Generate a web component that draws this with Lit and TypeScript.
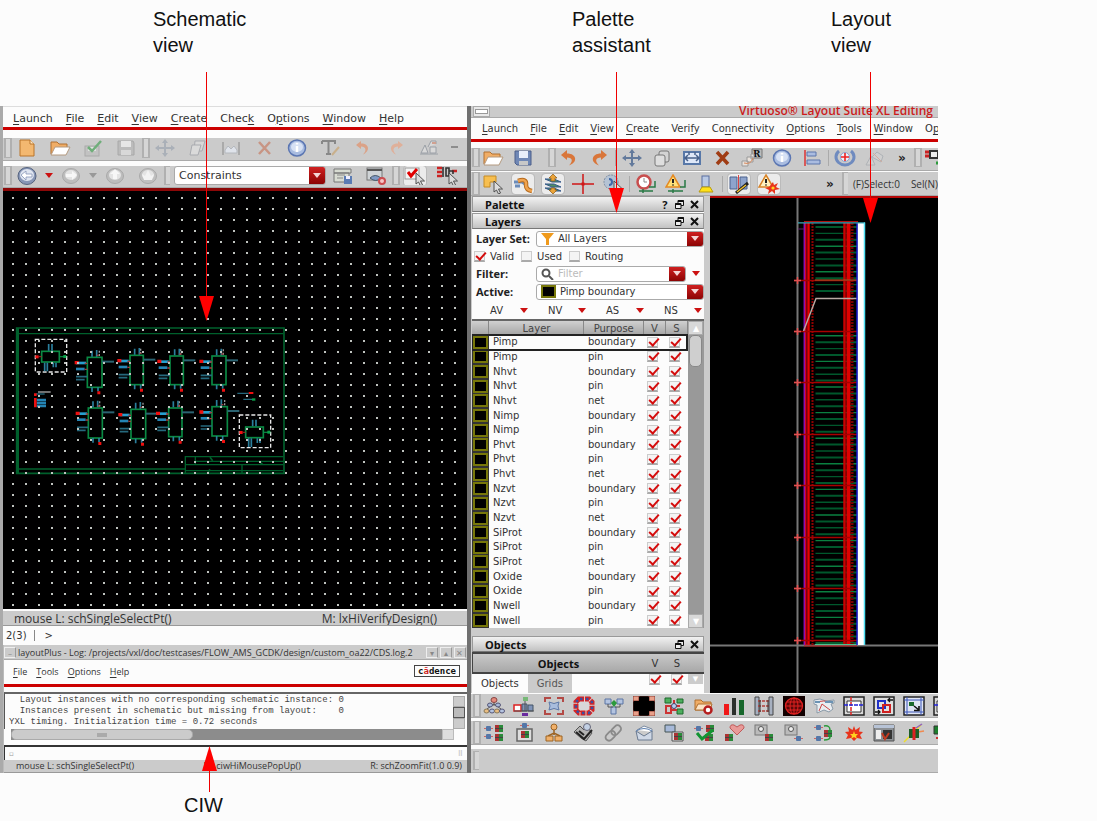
import { LitElement, html, svg, css } from "lit";
import { customElement, property } from "lit/decorators.js";

/* ---------- icon drawings, all on a 22 x 20 grid ---------- */
const disc = (c: string) => svg`<ellipse cx="11" cy="10" rx="8.5" ry="7.5" fill=${c} stroke="#aaa"/><ellipse cx="11" cy="9" rx="6" ry="5" fill="#e4e4e4"/>`;
const pair = (x: number, y: number) => svg`<rect x=${x} y=${y} width="4" height="7" fill="#a33"/><rect x=${x + 4} y=${y} width="4" height="7" fill="#2a8a3a"/><path d="M${x} ${y + 3.5}h8" stroke="#444"/>`;
const plug = (x: number, y: number) => svg`<path d="M${x} ${y + 2.5}h9" stroke="#c66"/><rect x=${x + 2} y=${y} width="5" height="5" rx="1" fill="#5577a8"/>`;
const cross4 = (c: string) => svg`<path d="M11 1l3 4h-2v4h5v-2l4 3-4 3v-2h-5v4h2l-3 4-3-4h2v-4H5v2l-4-3 4-3v2h5V5H8z" fill=${c}/>`;
const cursor = svg`<path d="M12 7v11l2.5-2 2 4 2-1-2-4h4z" fill="#ddd" stroke="#444" stroke-width=".9"/>`;

const ICONS: Record<string, unknown> = {
  new: svg`<path d="M4 2h10l4 4v12H4z" fill="#f3b870" stroke="#b9752b"/><path d="M14 2v4h4" fill="#ffe6c0" stroke="#b9752b"/>`,
  open: svg`<path d="M2 16V4h6l2 2h8v3" fill="#f0ad66" stroke="#b07030"/><path d="M2 17l4-8h15l-4 8z" fill="#fff" stroke="#b49a80"/>`,
  checksave: svg`<rect x="3" y="8" width="14" height="10" fill="#c2c2c2" stroke="#aaa"/><path d="M6 9h8v4H6z" fill="#e2e2e2"/><path d="M6 9l4 4 9-10" fill="none" stroke="#6fae7a" stroke-width="2.5"/>`,
  saveoff: svg`<path d="M3 3h15l1 2v12H3z" fill="#bcbcbc" stroke="#a8a8a8"/><path d="M6 3h10v6H6z" fill="#e6e6e6"/><path d="M6 12h10v5H6z" fill="#d8d8d8"/>`,
  save: svg`<path d="M3 3h16v14H5l-2-2z" fill="#6f87b5" stroke="#4c5f8a"/><path d="M7 3h9v7H7z" fill="#e8eefa"/><path d="M7 13h9v4H7z" fill="#c8c8c8"/>`,
  moveoff: cross4("#aab0b8"),
  move: cross4("#637a9c"),
  copyoff: svg`<path d="M8 3h10l-3 10H7z" fill="#d8d8d8" stroke="#a9abb0"/><path d="M5 7h9l-3 10H3z" fill="#dadada" stroke="#a9abb0"/>`,
  copy: svg`<rect x="8" y="3" width="10" height="11" rx="2" fill="#d4d4d4" stroke="#777"/><rect x="4" y="7" width="10" height="11" rx="2" fill="#dedede" stroke="#777"/>`,
  stretchoff: svg`<path d="M3 4v13M19 4v13" stroke="#aaa" stroke-width="2"/><path d="M5 12l3-4 3 3 3-3 3 4v3H5z" fill="#dfe3ea" stroke="#b4b8be"/>`,
  stretch: svg`<rect x="3" y="4" width="16" height="12" fill="#dfe8f8" stroke="#5878a8" stroke-width="2"/><path d="M4 10h14M7 7l-3 3 3 3M15 7l3 3-3 3M8 4v3M14 4v3" stroke="#48618a" fill="none" stroke-width="1.5"/>`,
  xoff: svg`<path d="M6 4l11 12M17 4L6 16" stroke="#c89584" stroke-width="2.5"/>`,
  x: svg`<path d="M6 4l11 12M17 4L6 16" stroke="#a03c14" stroke-width="3.5"/>`,
  info: svg`<ellipse cx="11" cy="10" rx="8.5" ry="8" fill="#a9bce0" stroke="#5b76b2" stroke-width="1.5"/><ellipse cx="11" cy="9" rx="6" ry="5" fill="#d7e1f4"/><path d="M11 5v1.6M11 8v6" stroke="#fff" stroke-width="2.4"/>`,
  text: svg`<path d="M3 3h13v3M3 3v3M9.500 3v12M7 16h5" stroke="#888" stroke-width="2" fill="none"/><path d="M13 17l7-8" stroke="#c9b08c" stroke-width="2"/>`,
  undooff: svg`<path d="M9 3L4 7l5 4V8.500c5 0 6 4 2 8 7-3 7-11-2-11z" fill="#dba287"/>`,
  redooff: svg`<path d="M13 3l5 4-5 4V8.500c-5 0-6 4-2 8-7-3-7-11 2-11z" fill="#dfb09a"/>`,
  undo: svg`<path d="M9 2L3 7l6 5V9.500c6 0 6 4 2 8 9-3 8-12-2-12z" fill="#d9763a"/>`,
  redo: svg`<path d="M13 2l6 5-6 5V9.500c-6 0-6 4-2 8-9-3-8-12 2-12z" fill="#d9763a"/>`,
  abc: svg`<path d="M2 16h18M3 15l4-8 3 8zM10 9l3-6h5v3M12 9h6v6h-6z" fill="#d9d9d9" stroke="#9a9fa6"/><path d="M14 5h4" stroke="#d0a090" stroke-width="2"/>`,
  dash: svg`<path d="M0 9h7M16 9h5" stroke="#8d8d8d" stroke-width="2"/>`,
  back: svg`<ellipse cx="11" cy="10" rx="9" ry="8.500" fill="#8796b6" stroke="#56647f"/><ellipse cx="11" cy="9" rx="7" ry="6" fill="#dfe5f0"/><path d="M5 9l5-4v3h6v3h-6v3z" fill="#fff" stroke="#8796b6" stroke-width=".8"/>`,
  fwdoff: svg`${disc("#bdbdbd")}<path d="M17 9l-5-4v3H6v3h6v3z" fill="#f7f7f7"/>`,
  upoff: svg`${disc("#bdbdbd")}<path d="M11 3l-5 5h3v5h4V8h3z" fill="#f7f7f7"/>`,
  topoff: svg`${disc("#c0c0c0")}<path d="M5 8l3 2 3-6 3 6 3-2-2 6H7z" fill="#f3f3f3"/>`,
  notesave: svg`<path d="M2 3h17v4H2zM2 7h15v9H2z" fill="#d8dcd2" stroke="#777"/><path d="M5 9h8M5 12h6" stroke="#888"/><path d="M12 10h8v8h-8z" fill="#5a7bb4"/><path d="M14 10h4v3h-4z" fill="#eef"/>`,
  viewdel: svg`<rect x="2" y="2" width="15" height="12" fill="#cfd3d6" stroke="#777"/><path d="M2 4h15" stroke="#555" stroke-width="2"/><path d="M5 12q5-5 11 0-5 5-11 0z" fill="#7f99c4" stroke="#456"/><circle cx="17" cy="15" r="3" fill="#f6c8c8" stroke="#cc4d50" stroke-width="2"/>`,
  checksel: svg`<rect x="1" y="2" width="14" height="11" fill="#f4f4f4" stroke="#999"/><path d="M4 6l3 4 6-7" stroke="#e00000" stroke-width="3" fill="none"/>${cursor}`,
  netsel: svg`<path d="M0 2h5M0 6h5M0 10h5M15 5h5" stroke="#c22" stroke-width="2.500"/><path d="M6 1v10M9 2h3v8H9zM12 5h4v3" stroke="#333" stroke-width="1.600" fill="none"/>${cursor}`,
  rotate: svg`<path d="M11 1h10v9H11z" fill="#bbb" stroke="#777"/><text x="12" y="9" font-size="9" font-weight="700" fill="#111" font-family="DejaVu Serif, serif">R</text><path d="M1 13h6v5H1zM6 9h6v5H6zM10 6h3v5h-3z" fill="#e9e2dc" stroke="#999"/><path d="M3 15q7 2 9-5" fill="none" stroke="#d8885b"/>`,
  align: svg`<path d="M4 2v16" stroke="#d33" stroke-width="1.500"/><path d="M6 4h9v4H6zM6 12h13v4H6z" fill="#aabce0" stroke="#5d77ac"/>`,
  target: svg`<path d="M5 3a9 8 0 1 0 12 0" fill="none" stroke="#6f8bbf" stroke-width="3"/><circle cx="11" cy="9" r="4.500" fill="#edf1fa" stroke="#8aa0cc"/><path d="M11 5v8M7 9h8" stroke="#e22" stroke-width="1.600"/>`,
  figoff: svg`<path d="M2 17l5-9 4 9zM8 9l5-5 6 4-2 6z" fill="#cfcfcf" stroke="#aeb2b6"/><path d="M9 5l9 9" stroke="#d2ac9e"/>`,
  neton: svg`<path d="M1 4h5M1 8h5" stroke="#c22" stroke-width="3"/><path d="M6 3h8v7H6z" fill="#eee" stroke="#333" stroke-width="2"/><path d="M12 15h9M16 11v8" stroke="#2c9a3c" stroke-width="3"/>`,
  rectcur: svg`<path d="M2 2h12v6H8v5H2z" fill="#f7bf50" stroke="#c58b24"/>${cursor}`,
  route: svg`<path d="M2 8h8l3 2M3 12h5" stroke="#6b8cba" stroke-width="3" fill="none"/><path d="M6 7q9-3 8 4 0 5 6 6" fill="none" stroke="#b86c1e" stroke-width="4.500"/><path d="M6 7q9-3 8 4 0 5 6 6" fill="none" stroke="#efa34f" stroke-width="2.500"/>`,
  layers: svg`<path d="M3 5h9l7 3h-9zM3 10h9l7 3h-9zM3 14h9l7 3h-9z" fill="#4f8f62" stroke="#36598c"/><path d="M11 0l4 4h-2v3h-4V4H7zM11 20l4-4h-2v-2h-4v2H7z" fill="#eba338" stroke="#875a1a" stroke-width=".7"/>`,
  crosshair: svg`<path d="M0 10h22M11 0v20" stroke="#cf1717" stroke-width="1.500"/><path d="M9.500 8.500h3v3h-3z" fill="#cf1717"/>`,
  probe: svg`<circle cx="9" cy="8" r="7" fill="#b5c3d4" stroke="#7b8aa0" stroke-dasharray="2 1"/><path d="M7 5a3 3 0 1 1 0 6" fill="none" stroke="#3f68a8" stroke-width="2"/>${cursor}`,
  gauge: svg`<circle cx="9" cy="8" r="6.500" fill="#fff" stroke="#c84e4e" stroke-width="2.500"/><path d="M9 4v4h3" stroke="#888" fill="none"/><path d="M4 17h14M8 15v4M14 13h6V7" stroke="#287a45" stroke-width="1.500" fill="none"/>`,
  warnnet: svg`<path d="M8 1l7 12H1z" fill="#ffe27a" stroke="#e58a22" stroke-width="1.500"/><path d="M8 5v4M8 10.500v1" stroke="#222" stroke-width="2"/><path d="M3 17h15M8 15v4M15 13h5V6" stroke="#287a45" stroke-width="1.500" fill="none"/>`,
  lamp: svg`<rect x="7" y="2" width="7" height="11" fill="#b9c9e4" stroke="#5a6fa0"/><path d="M4 18l3-5h8l3 5z" fill="#ffe21a" stroke="#b79a10"/>`,
  pencil: svg`<path d="M2 3h7v12H2zM12 3h7v12h-7z" fill="#8ea4cd" stroke="#4c628e"/><path d="M10.500 1v14" stroke="#d44"/><path d="M8 19L20 9" stroke="#222" stroke-width="3"/><path d="M9 18l9-7" stroke="#f0c030" stroke-width="1.500"/>`,
  warnburst: svg`<path d="M8 1l7 12H1z" fill="#fff2c0" stroke="#d8842a" stroke-width="1.500"/><path d="M8 5v4M8 10.500v1" stroke="#222" stroke-width="2"/><path d="M15 8l1 3 4-2-2 4 4 2-5 1 0 4-3-3-4 3 1-4-4-2 4-1z" fill="#e8341c"/><circle cx="15" cy="14" r="1.600" fill="#ffd21e"/>`,
  tree: svg`<path d="M11 5v5M4 13l7-5 7 5" stroke="#555" fill="none"/><ellipse cx="11" cy="4" rx="3" ry="2.500" fill="#e58b7c" stroke="#844"/><ellipse cx="7" cy="9" rx="2.500" ry="2" fill="#a6b8d8" stroke="#557"/><ellipse cx="15" cy="9" rx="2.500" ry="2" fill="#a6b8d8" stroke="#557"/><ellipse cx="3.500" cy="15" rx="2.500" ry="2" fill="#e9bd82" stroke="#875"/><ellipse cx="9" cy="15" rx="2.500" ry="2" fill="#b5c4e0" stroke="#557"/><ellipse cx="14" cy="15" rx="2.500" ry="2" fill="#e9bd82" stroke="#875"/><ellipse cx="19" cy="15" rx="2.500" ry="2" fill="#b5c4e0" stroke="#557"/>`,
  origin: svg`<path d="M1 9h7v6H1z" fill="#fff" stroke="#d22" stroke-width="1.500"/><path d="M9 8h5v7H9zM15 9h5v6h-5z" fill="#7f93b8" stroke="#456"/><path d="M12 1v14M1 15h20" stroke="#555"/><path d="M10 1h5v4h-5z" fill="#78b978"/><path d="M9 17h6v3H9z" fill="#6a2aa0"/>`,
  fit: svg`<path d="M2 6V2h6M14 2h6v4M20 14v4h-6M8 18H2v-4" stroke="#b34a46" stroke-width="2" fill="none"/><path d="M6 6q5 3 10 0-2 4 0 8-5-3-10 0 2-4 0-8z" fill="#a9bddd" stroke="#5c78a8"/>`,
  ring: svg`<path d="M6 3h10l3 3v8l-3 3H6l-3-3V6z" fill="#d8d8d8" stroke="#d92222" stroke-width="5" stroke-dasharray="5 1"/><path d="M6 3h10l3 3v8l-3 3H6l-3-3V6z" fill="none" stroke="#3b4fa0" stroke-width="2.500" stroke-dasharray="2.500 3.500" stroke-dashoffset="-1"/>`,
  flow: svg`<path d="M2 3h6v5H2zM14 3h6v5h-6zM8 11h5v7H8z" fill="#b4c4e0" stroke="#5b74a4"/><path d="M5 8v3h5M17 8v3h-5" stroke="#555" fill="none"/><path d="M8 7l3-3 3 3-3 4z" fill="#2c9a3c"/>`,
  blackcross: svg`<path d="M0 0h22v20H0z" fill="#2a1512"/><path d="M0 0h6v5H0zM16 0h6v5h-6zM0 15h6v5H0zM16 15h6v5h-6z" fill="#e8a08a" stroke="#8a3a30"/><path d="M6 1h10v4h5v10h-5v4H6v-4H1V5h5z" fill="#000"/>`,
  blocks: svg`<path d="M2 2h6v5H2zM14 3h6v4h-6zM14 13h6v5h-6z" fill="#4eae5e" stroke="#1d6a2c"/><path d="M3 10h5v7H3zM11 4v6h6M8 14h6" fill="none" stroke="#c33" stroke-width="2"/><circle cx="11" cy="10" r="2.500" fill="#b8cdf0" stroke="#446"/>`,
  folderx: svg`<path d="M2 14V4h6l2 2h8v8z" fill="#f0ad66" stroke="#b07030"/><path d="M2 14l3-6h14l-2 6z" fill="#fbe3c5" stroke="#b07030"/><circle cx="15" cy="14" r="3.500" fill="#fff" stroke="#b51e1e" stroke-width="2.500"/>`,
  bars: svg`<path d="M1 8h5v11H1z" fill="#f01818"/><path d="M9 2h4v17H9z" fill="#2b2f2b"/><path d="M16 4h5v15h-5z" fill="#17672b"/>`,
  ladder: svg`<path d="M2 1h4v18H2zM16 1h4v18h-4z" fill="#a7b0c0" stroke="#444"/><path d="M5 5h12M5 10h12M5 15h12" stroke="#b3403a" stroke-width="1.500" stroke-dasharray="3 1"/><path d="M7 4v12M15 4v12" stroke="#333"/>`,
  globe: svg`<path d="M0 0h22v20H0z" fill="#100"/><ellipse cx="11" cy="10" rx="8.500" ry="8" fill="#5a0808" stroke="#e02020" stroke-width="1.300"/><ellipse cx="11" cy="10" rx="4" ry="8" fill="none" stroke="#e02020"/><path d="M11 2v16M3 10h16M4 6h14M4 14h14" stroke="#e02020"/>`,
  map: svg`<path d="M1 4l6-1 6 2 8-1v3l-3 1 2 5-4 3-5-2-7 3V9L1 8z" fill="#e9eef2" stroke="#8a9aa8"/><path d="M2 6q8-2 18 0M6 15l3-7 8 6" stroke="#c44" fill="none"/><path d="M12 5h8v2h-8zM2 5h5v2H2z" fill="#6c93b4"/>`,
  framecross: svg`<path d="M1 1h20v18H1z" fill="#d8d8d8" stroke="#222" stroke-width="1.500"/><path d="M4 5h14v11H4z" fill="#fff" stroke="#333"/><path d="M8 1v18" stroke="#d22" stroke-width="1.500" stroke-dasharray="4 1"/><path d="M1 9h20" stroke="#2222d8" stroke-width="1.500" stroke-dasharray="4 1"/>`,
  swap: svg`<path d="M1 1h20v18H1z" fill="#e0e0e0" stroke="#222" stroke-width="1.500"/><path d="M5 5h7v7H5z" fill="none" stroke="#2030c8" stroke-width="2"/><path d="M10 9h7v7h-7z" fill="none" stroke="#d02020" stroke-width="2"/><path d="M15 4h5M17 2l-2 2 2 2M2 16h5M5 14l2 2-2 2" stroke="#111" stroke-width="1.300" fill="none"/>`,
  resize: svg`<path d="M1 1h20v18H1z" fill="#e0e6f4" stroke="#222" stroke-width="1.500"/><path d="M4 1v18M18 1v18M1 4h20M1 16h20" stroke="#3a55b8"/><path d="M6 6h5v4H6z" fill="#1b6a2e"/><path d="M11 10l5 4M16 10v4.500h-5" stroke="#111" stroke-width="1.600" fill="none"/>`,
  sendpair: svg`${plug(1, 3)}${plug(1, 11)}${pair(12, 2)}${pair(12, 11)}`,
  chipbox: svg`<rect x="4" y="6" width="15" height="12" fill="#ddd" stroke="#666" stroke-width="1.500"/>${pair(8, 8)}${plug(7, 0)}`,
  stamp: svg`<circle cx="11" cy="4" r="3" fill="#f0b06a" stroke="#9c6424"/><path d="M11 7v5M5 13l6-3 6 3" stroke="#9c6424" fill="none" stroke-width="1.500"/><path d="M3 13h7v5H3zM12 13h7v5h-7z" fill="#f0b06a" stroke="#9c6424"/>`,
  tools: svg`<path d="M1 9l6-6 4 4 3-3 5 6-6 8-5-3z" fill="#b4b4b4" stroke="#555"/><circle cx="14" cy="4" r="3.500" fill="#c2d0e4" stroke="#667"/><path d="M3 9l8 7 8-9M6 8l5 4" stroke="#222" stroke-width="2" fill="none"/>`,
  clip: svg`<g transform="rotate(-45 11 10)" fill="none" stroke="#8a8a8a" stroke-width="1.800"><rect x="1" y="6" width="11" height="7" rx="3.500"/><rect x="9" y="6" width="11" height="7" rx="3.500"/></g>`,
  mail: svg`<path d="M4 7l7-4 8 3v3" fill="#fff" stroke="#7a8aa0"/><path d="M3 8l8 5 8-5v9H5z" fill="#cfd8e6" stroke="#6a7a90"/><path d="M3 8q8-5 16 0" fill="none" stroke="#5c7fb0"/>`,
  screens: svg`<path d="M2 2h10v7H2z" fill="#a7b9d8" stroke="#455"/><path d="M9 9h11v9H9z" fill="#ddd" stroke="#555"/>${pair(11, 10)}`,
  okpair: svg`${pair(13, 2)}${pair(12, 11)}${plug(1, 3)}<path d="M4 10l5 6 11-9" stroke="#129432" stroke-width="3" fill="none"/>`,
  heartpair: svg`<path d="M14 12L7 5q0-4 4-3l3 2 3-2q4-1 4 3z" fill="#e89a98" stroke="#c05a5a"/>${pair(2, 11)}`,
  findpair: svg`<rect x="2" y="2" width="12" height="10" fill="#bbb" stroke="#777"/><circle cx="8" cy="6" r="2.500" fill="#eee" stroke="#555"/>${pair(12, 11)}`,
  findplug: svg`<rect x="2" y="2" width="12" height="10" fill="#bbb" stroke="#777"/><circle cx="8" cy="6" r="2.500" fill="#eee" stroke="#555"/>${plug(11, 13)}`,
  loop: svg`${plug(1, 2)}${plug(1, 13)}${pair(11, 7)}<path d="M11 3q6-1 6 4M11 17q6 0 6-3" stroke="#2a9a3a" stroke-width="1.500" fill="none"/>`,
  burst: svg`<path d="M11 3l1.500 4L17 4l-1 4.500 4 .5-3 3 2 4-5-1-3 3-3-3-5 1 2-4-3-3 4-.5L5 4l4.500 3z" fill="#e8341c"/><path d="M11 8l1 3h3l-2 2 1 3-3-2-3 2 1-3-2-2h3z" fill="#ffd21e"/>`,
  window: svg`<path d="M1 2h20v16H1z" fill="#8c9094" stroke="#555"/><path d="M1 2h20v3H1z" fill="#b7c3d6"/><path d="M3 7h5v9H3z" fill="#eee"/><path d="M10 7h9v9h-9z" fill="#333"/><path d="M9 10l3 6 4-6" stroke="#c23b22" stroke-width="2" fill="none"/>`,
  spark: svg`<path d="M1 19L18 2" stroke="#eedd28" stroke-width="1.500"/><path d="M13 5l6-4" stroke="#9060c0" stroke-width="1.500"/><path d="M15 9l6-1" stroke="#f08a50" stroke-width="1.500"/><path d="M6 6h10v9H6z" fill="#1c5e26"/><path d="M11 4v13" stroke="#d22" stroke-width="3"/>`,
  greenbox: svg`<path d="M1 3h9v8H1z" fill="#1c7e2c" stroke="#333"/><path d="M3 15h8" stroke="#c33" stroke-width="2"/>`,
};

/* ---------- shared styles ---------- */
const base = css`
  :host { display: block; min-width: 0; color: #333; font-family: "DejaVu Sans", sans-serif; }
  * { box-sizing: border-box; }
  button, select, input { font: inherit; color: inherit; background: none; border: 0; padding: 0; margin: 0; border-radius: 0; }
  svg { display: block; flex: none; }
  .menu { display: flex; align-items: center; overflow: hidden; white-space: nowrap; background: #fcfcfc; }
  .menu button { flex: none; }
  .menu u { text-underline-offset: 2px; }
  .rule { height: 3px; background: #cc0000; }
  .caret { width: 0; height: 0; border: 4px solid transparent; border-top: 5px solid #cc1111; border-bottom: 0; flex: none; }
  .caret.off { border-top-color: #999; }
  .combo { display: flex; align-items: center; min-width: 0; background: #fff; border: 1px solid #aaa; border-radius: 3px; overflow: hidden; gap: 4px; }
  .combo select, .combo input { appearance: none; flex: 1; min-width: 0; outline: 0; }
  .drop { align-self: stretch; width: 16px; flex: none; display: flex; align-items: center; justify-content: center; background: linear-gradient(#cf2020, #8c0404); }
  .drop .caret { border-top-color: #f4d6d6; }
  .status { display: flex; align-items: center; justify-content: space-between; background: #cbcbcb; white-space: nowrap; overflow: hidden; font-family: "Open Sans", sans-serif; }
`;

const menu = (items: string[]) => items.map((t) => {
  const [a, b, c] = t.split("_");
  return html`<button>${a}<u>${b}</u>${c}</button>`;
});

/* Toolbar: "|" grip, ":" separator, "." spacer, "v"/"w" drop arrows, ">" overflow mark, "~name" pressed button */
@customElement("tool-bar")
class ToolBar extends LitElement {
  @property() items = "";
  @property({ type: Number }) pitch = 30;
  static styles = [base, css`
    .bar { display: flex; align-items: center; height: 100%; overflow: hidden; }
    .grip { flex: none; width: 8px; align-self: stretch; border: solid #b0b0b0; border-width: 1px 2px; background: #d6d6d6; margin-inline-end: -2px; }
    .sep { flex: none; width: 1px; height: 16px; margin: 0 1px; background: #aaa; }
    .spacer { flex: none; width: 10px; }
    button { flex: none; height: 100%; display: flex; align-items: center; justify-content: center; }
    .arrow { width: 11px; }
    .more { width: 24px; font-size: 12px; font-weight: 700; color: #222; }
    .down svg { background: #ececec; outline: 1px solid #bbb; border-radius: 3px; }
  `];
  render() {
    return html`<div class="bar">${this.items.split(" ").map((n) => {
      if (n === "|") return html`<span class="grip"></span>`;
      if (n === ":") return html`<span class="sep"></span>`;
      if (n === ".") return html`<span class="spacer"></span>`;
      if (n === "v") return html`<button class="arrow" aria-label="history"><span class="caret"></span></button>`;
      if (n === "w") return html`<button class="arrow" aria-label="history"><span class="caret off"></span></button>`;
      if (n === ">") return html`<button class="more">»</button>`;
      const on = n[0] === "~";
      const key = on ? n.slice(1) : n;
      return html`<button class=${on ? "down" : ""} style="width:${this.pitch}px" aria-label=${key}><svg width="22" height="20" viewBox="0 0 22 20">${ICONS[key]}</svg></button>`;
    })}</div>`;
  }
}

/* ---------- schematic canvas, drawn on a grid three units to the pixel ---------- */
const CHIPS = [[262, 112, 44, 90], [390, 106, 40, 88], [510, 108, 40, 86], [636, 108, 42, 86], [265, 264, 42, 90], [393, 268, 44, 88], [506, 264, 40, 86], [636, 260, 46, 88]];

@customElement("schematic-canvas")
class SchematicCanvas extends LitElement {
  static styles = [base, css`.canvas { width: 100%; height: 418px; background: #000; }`];
  chip([x, y, w, h]: number[]) {
    return svg`
      <rect x=${x} y=${y} width=${w} height=${h} fill="none" stroke="#0a8a44" stroke-width="5"/>
      <path d="M${x + 14} ${y - 2}v-18M${x + 28} ${y - 2}v-20M${x + 14} ${y + h}v14M${x + 32} ${y + h}v12" stroke="#2a7f9c" stroke-width="5"/>
      <path d="M${x + w - 8} ${y - 4}v-20" stroke="#999" stroke-width="4" stroke-dasharray="6 4"/>
      <path d="M${x + w} ${y + 13}h36" stroke="#2b6472" stroke-width="6"/>
      <path d="M${x - 34} ${y + 17}h30" stroke="#26a0d0" stroke-width="8"/>
      <path d="M${x - 34} ${y + 35}h26" stroke="#2484b4" stroke-width="8"/>
      <path d="M${x - 34} ${y + 58}h34M${x - 34} ${y + 67}h26" stroke="#25687c" stroke-width="5"/>
      <path d="M${x - 38} ${y + 11}h12v10h-12zM${x + 30} ${y + h + 12}h9v9h-9z" fill="#ee1010"/>
      <path d="M${x - 8} ${y + 18}h8M${x - 8} ${y + 36}h8M${x + 28} ${y - 6}h6" stroke="#a04040" stroke-width="4"/>`;
  }
  block(x: number, y: number) {
    return svg`
      <rect x=${x} y=${y} width="94" height="98" fill="none" stroke="#e8e8e8" stroke-width="4" stroke-dasharray="12 6"/>
      <rect x=${x + 19} y=${y + 36} width="53" height="32" fill="none" stroke="#0a8a44" stroke-width="5"/>
      <path d="M${x + 40} ${y + 34}v-20M${x + 50} ${y + 34}v-20M${x + 28} ${y + 70}v26M${x + 36} ${y + 70}v26M${x + 54} ${y + 70}v14M${x + 62} ${y + 70}v14" stroke="#2a7f9c" stroke-width="5"/>
      <path d="M${x} ${y + 48}h10v9H${x}z" fill="#ee1010"/><path d="M${x + 10} ${y + 52}h9" stroke="#a22" stroke-width="3"/>
      <path d="M${x + 74} ${y + 52}h12" stroke="#0a8040" stroke-width="4"/><path d="M${x + 84} ${y + 47}h9v9h-9z" fill="#08a048"/>`;
  }
  render() {
    return svg`<svg class="canvas" role="img" aria-label="schematic">
      <defs><pattern id="dots" x="9" y="6" width="13" height="11" patternUnits="userSpaceOnUse"><rect width="2" height="2" fill="#c0c4c0"/></pattern></defs>
      <g transform="translate(-3 129) scale(.33333)">
        <g fill="none" stroke="#00602c">
          <path d="M50 24H852V460H50z" stroke-width="5"/><path d="M54 41H850M54 447H556" stroke-width="4"/><path d="M54 24V460" stroke-width="6"/>
          <path d="M556 460V410H850M586 410v24M556 434H850M586 424H850M726 434v26M556 452H850" stroke-width="4"/>
          <path d="M630 412l8 10M780 426l8 8M624 456l6-8" stroke-width="5"/>
        </g>
        ${CHIPS.map((c) => this.chip(c))}
        ${this.block(106, 58)}${this.block(718, 285)}
        <path d="M114 216h38" stroke="#aaa" stroke-width="4"/><path d="M108 222h26" stroke="#25687c" stroke-width="4"/>
        <path d="M110 240h28M110 249h28M110 258h28" stroke="#2484b4" stroke-width="7"/>
        <path d="M102 220h8v8h-8zM102 234h8v28h-8zM746 216h14v6h-14z" fill="#ee1010"/>
        <path d="M712 220h34M730 238h26" stroke="#25687c" stroke-width="4"/><path d="M756 235h10v7h-10z" fill="#08a048"/>
      </g>
      <rect width="100%" height="100%" fill="url(#dots)"/>
    </svg>`;
  }
}

/* ---------- layout canvas ---------- */
@customElement("layout-canvas")
class LayoutCanvas extends LitElement {
  static styles = [base, css`:host { background: #000; overflow: hidden; } .canvas { width: 100%; height: 495px; }`];
  render() {
    const fingers: number[] = [];
    for (let y = 227; y < 643; y += 6.4) if (y < 296 || y > 334) fingers.push(y);
    const rows = [280, 331, 382, 434, 485, 537, 588, 640];
    return svg`<svg class="canvas" role="img" aria-label="layout"><g transform="translate(-710 -198)">
      <path d="M797.5 198V693" stroke="#777" stroke-width="2"/><path d="M700 645.500H2000" stroke="#777" stroke-width="2"/>
      ${fingers.map((y, i) => svg`<path d="M815.5 ${y}H857" stroke=${i % 4 === 3 ? "#0a8040" : "#00582c"} stroke-width=${i % 2 ? 1.4 : 2}/>`)}
      <path d="M808.500 223V645" stroke="#e80000" stroke-width="2.500"/>
      <path d="M812.500 223V645" stroke="#900000" stroke-width="2" stroke-dasharray="2 1"/>
      <path d="M805.800 223V645" stroke="#e00020" stroke-width="1.500"/><path d="M804.300 223V645" stroke="#8a10b0" stroke-width="1.500"/>
      <path d="M844.500 223V645" stroke="#c80000" stroke-width="2.500"/><path d="M848.500 223V645" stroke="#e00000" stroke-width="4"/>
      <path d="M852 223V645" stroke="#780000" stroke-width="3" stroke-dasharray="2 1"/><path d="M846 223V645" stroke="#960000"/>
      ${rows.map((y) => svg`<path d="M794 ${y + 0.5}H857" stroke="#a80000" stroke-width="1.500"/><path d="M794 ${y + 0.5}h7M797.5 ${y - 3}v7" stroke="#e05050" stroke-width="1.500"/>`)}
      <path d="M815 280H857" stroke="#a0622c"/>
      <path d="M803.500 331L816 298.500H857" fill="none" stroke="#b9aaa4" stroke-width="1.400"/>
      <path d="M804 221.500H858M804 646H857" stroke="#b01010"/><path d="M815 644.500H857" stroke="#50c090"/>
      <path d="M798 229h6" stroke="#602070"/>
      <path d="M857.500 223h7v422h-7z" fill="#fff"/><path d="M857 223V645" stroke="#1818f0" stroke-width="1.300"/>
      <path d="M798 222.800H865" stroke="#3aa8b8" stroke-width="1.300"/><path d="M864.500 222.500V645" stroke="#50e0f4" stroke-width="1.500"/>
    </g></svg>`;
  }
}

/* ---------- palette assistant ---------- */
const LAYERS: [string, string[]][] = [
  ["Pimp", ["boundary", "pin"]], ["Nhvt", ["boundary", "pin", "net"]], ["Nimp", ["boundary", "pin"]],
  ["Phvt", ["boundary", "pin", "net"]], ["Nzvt", ["boundary", "pin", "net"]], ["SiProt", ["boundary", "pin", "net"]],
  ["Oxide", ["boundary", "pin"]], ["Nwell", ["boundary", "pin"]],
];
const ROWS = LAYERS.flatMap(([n, ps]) => ps.map((p) => [n, p]));

@customElement("palette-panel")
class PalettePanel extends LitElement {
  static styles = [base, css`
    :host { font-size: 10px; background: #fcfcfc; overflow: hidden; }
    .title { display: flex; align-items: center; height: 16px; margin-bottom: 1px; padding: 0 2px 0 12px; gap: 3px; border: 1px solid #999; border-bottom-color: #777; background: linear-gradient(#f2f2f2, #c2c2c2); font: 700 11px "Open Sans", sans-serif; color: #111; }
    .title h2 { flex: 1; font: inherit; margin: 0; }
    .title button { width: 12px; height: 14px; display: flex; align-items: center; justify-content: center; }
    .row { display: grid; grid-template-columns: 60px 1fr; align-items: center; height: 17px; padding-left: 4px; margin-bottom: 1px; }
    .row .name { font: 700 11px "Open Sans", sans-serif; color: #222; }
    .row .combo { height: 16px; padding-left: 4px; }
    .filter { display: flex; align-items: center; min-width: 0; }
    .filter .combo { flex: 1; }
    .filter > .caret { margin: 0 4px 0 6px; }
    .filter input::placeholder { color: #bbb; opacity: 1; }
    .checks { display: flex; align-items: center; height: 17px; gap: 7px; padding-left: 2px; }
    .checks label { display: flex; align-items: center; gap: 5px; }
    input[type="checkbox"] { appearance: none; display: block; width: 11px; height: 11px; background: #f4f4f4; border: solid #ccc; border-width: 1px 1px 2px; border-bottom-color: #aaa; }
    input[type="checkbox"]:checked::after { content: ""; display: block; width: 4px; height: 8px; margin: -2px 0 0 3px; border: solid #d40c0c; border-width: 0 2px 2px 0; transform: rotate(42deg); }
    .sets { display: grid; grid-template-columns: repeat(4, 1fr); height: 18px; }
    .sets button { display: flex; align-items: center; justify-content: space-between; padding: 0 2px 0 18px; }
    .swatch { display: block; flex: none; width: 15px; height: 13px; background: #000; border: 2px solid #77770a; }
    .list { display: flex; border-top: 2px solid #666; }
    table { flex: 1; height: 307px; border-collapse: collapse; table-layout: fixed; }
    th { height: 14px; padding: 0; font-weight: 400; color: #444; background: linear-gradient(#d0d0d0, #a4a4a4); border-right: 1px solid #888; text-align: center; }
    td { height: 14px; padding: 0 0 0 4px; line-height: 12px; }
    td:first-child { padding: 0 0 0 1px; }
    tbody tr { background: linear-gradient(90deg, #333 17px, transparent 17px); }
    tr.current { outline: 2px solid #222; outline-offset: -1px; }
    .c0 { width: 17px; } .c1 { width: 95px; } .cv { width: 22px; }
    .scroll { flex: none; width: 16px; display: flex; flex-direction: column; align-items: center; background: #999; }
    .scroll button { width: 15px; height: 14px; background: #d8d8d8; color: #fff; font-size: 8px; border: 1px solid #aaa; }
    .thumb { width: 13px; height: 32px; border-radius: 5px; background: #cfcfcf; border: 1px solid #888; }
    .space { flex: 1; }
    .gap { height: 8px; background: #cbcbcb; }
    .objects { display: grid; grid-template-columns: 1fr 22px 22px 16px; height: 22px; margin-top: -1px; border: solid #444; border-width: 2px 0 2px 1px; background: linear-gradient(#c8c8c8, #a8a8a8); text-align: center; align-items: center; }
    .objects b { font: 700 11px "Open Sans", sans-serif; color: #111; }
    .tabs { display: grid; grid-template-columns: 1fr 22px 22px 16px; align-items: start; height: 19px; background: #fcfcfc; }
    .tabs nav { display: flex; align-self: stretch; }
    .tabs nav button { padding: 0 9px; font-size: 10px; }
    .tabs nav .back { background: #cbcbcb; color: #555; }
    .tabs input { margin-left: 5px; }
    .cell { width: 15px; height: 10px; background: #ccc; color: #fff; font-size: 7px; }
  `];
  restore = html`<button aria-label="float"><svg width="9" height="9" viewBox="0 0 9 9" fill="#eee" stroke="#111"><path d="M3 .5h5.500v5H3z"/><path d="M3 1h5.500" stroke-width="2"/><path d="M.5 3.500H6v5H.5z"/><path d="M.5 4H6" stroke-width="2"/></svg></button>`;
  close = html`<button aria-label="close"><svg width="9" height="9" viewBox="0 0 9 9" stroke="#111" stroke-width="2"><path d="M1 1l7 7M8 1L1 8"/></svg></button>`;
  render() {
    const drop = html`<span class="drop"><span class="caret"></span></span>`;
    return html`
      <div class="title"><h2>Palette</h2><button>?</button>${this.restore}${this.close}</div>
      <div class="title"><h2>Layers</h2>${this.restore}${this.close}</div>
      <div class="row"><label class="name" for="set">Layer Set:</label>
        <div class="combo"><svg width="13" height="12" viewBox="0 0 13 12"><path d="M0 0h13L8 6v6H5V6z" fill="#f09a1c"/></svg><select id="set"><option>All Layers</option></select>${drop}</div></div>
      <div class="checks">
        <label><input type="checkbox" checked>Valid</label><label><input type="checkbox">Used</label><label><input type="checkbox">Routing</label>
      </div>
      <div class="row"><label class="name" for="filter">Filter:</label>
        <div class="filter"><div class="combo"><svg width="13" height="12" viewBox="0 0 13 12" fill="none" stroke="#555" stroke-width="2"><circle cx="5" cy="5" r="3.500"/><path d="M8 8l4 4"/></svg><input id="filter" placeholder="Filter">${drop}</div><span class="caret"></span></div></div>
      <div class="row"><label class="name" for="active">Active:</label>
        <div class="combo"><span class="swatch"></span><select id="active"><option>Pimp boundary</option></select>${drop}</div></div>
      <div class="sets">${["AV", "NV", "AS", "NS"].map((t) => html`<button>${t}<span class="caret"></span></button>`)}</div>
      <div class="list">
        <table>
          <colgroup><col class="c0"><col class="c1"><col><col class="cv"><col class="cv"></colgroup>
          <thead><tr><th></th><th>Layer</th><th>Purpose</th><th>V</th><th>S</th></tr></thead>
          <tbody>${ROWS.map(([n, p], i) => html`<tr class=${i ? "" : "current"}><td><span class="swatch"></span></td><td>${n}</td><td>${p}</td>
            <td><input type="checkbox" checked aria-label="${n} ${p} visible"></td><td><input type="checkbox" checked aria-label="${n} ${p} selectable"></td></tr>`)}</tbody>
        </table>
        <div class="scroll"><button>▲</button><span class="thumb"></span><span class="space"></span><button>▼</button></div>
      </div>
      <div class="gap"></div>
      <div class="title"><h2>Objects</h2>${this.restore}${this.close}</div>
      <div class="objects"><b>Objects</b><span>V</span><span>S</span><span></span></div>
      <div class="tabs"><nav><button>Objects</button><button class="back">Grids</button></nav>
        <input type="checkbox" checked aria-label="objects visible"><input type="checkbox" checked aria-label="objects selectable"><button class="cell">▼</button></div>`;
  }
}

/* ---------- page ---------- */
@customElement("app-root")
class AppRoot extends LitElement {
  static styles = [base, css`
    :host { min-height: 100vh; background: #fcfcfc; }
    .notes { position: relative; z-index: 2; display: grid; font: 20px/26px "Liberation Sans", sans-serif; color: #111; pointer-events: none; }
    .top { grid-template-columns: 153fr 419fr 259fr 266fr; height: 106px; padding-top: 6px; }
    .bottom { grid-template-columns: 184fr 913fr; padding-top: 19px; }
    .note { position: relative; }
    .note p { margin: 0; }
    .arrow { position: absolute; top: 66px; }
    .a1 { left: 46px; } .a2 { left: 37px; } .a3 { left: 32px; }
    .up { top: auto; bottom: 26px; left: 18px; transform: rotate(180deg); }
    .windows { display: grid; grid-template-columns: 467fr 471fr; margin-right: 14.500%; height: 667px; }
    .win { min-width: 0; display: flex; flex-direction: column; overflow: hidden; }
    .left { border-left: 3px solid #aaa; }
    .right { border-left: 4px solid #707070; }
    .left > .menu { height: 21px; padding: 2px 10px 0; gap: 13px; font-size: 11px; border-top: 1px solid #ddd; }
    .tools { flex: none; display: flex; background: #cbcbcb; border-bottom: 1px solid #aaa; overflow: hidden; }
    .tools tool-bar { flex: none; }
    .tools .combo { flex: none; width: 152px; margin: 0 0 0 4px; padding-left: 4px; font-size: 11px; }
    .l1 { height: 23px; margin-top: 8px; padding: 0 0 2px 1px; }
    .l2 { height: 22px; margin-top: 5px; padding: 0 0 2px 1px; }
    .dark { height: 3px; background: #8c0808; flex: none; }
    .left > .status { height: 15px; margin-top: 2px; padding: 0 30px 0 11px; font-size: 12px; line-height: 13px; border-bottom: 1px solid #999; flex: none; }
    .prompt { display: flex; align-items: center; height: 19px; flex: none; font-size: 10px; }
    .prompt span { padding: 0 7px 0 3px; border-right: 1px solid #888; }
    .prompt input { flex: 1; min-width: 0; padding-left: 10px; }
    .ciw { flex: 1; display: flex; flex-direction: column; min-height: 0; border-left: 1px solid #bbb; }
    .ciw .caption { display: flex; align-items: center; gap: 2px; height: 15px; background: #cbcbcb; font: 9px "Open Sans", sans-serif; white-space: nowrap; overflow: hidden; border-bottom: 1px solid #aaa; padding-right: 1px; }
    .ciw h1 { flex: 1; min-width: 0; overflow: hidden; font: inherit; margin: 0; }
    .box { flex: none; width: 12px; height: 11px; display: flex; align-items: center; justify-content: center; border: 1px solid #eee; border-right-color: #999; color: #888; font-size: 8px; }
    .ciw .menu { height: 24px; padding: 0 7px 2px 9px; gap: 9px; font: 9px "Open Sans", sans-serif; }
    .brand { margin-left: auto; padding: 0 3px; border: 1px solid #444; font: 700 9px/10px "DejaVu Sans Mono", monospace; color: #111; }
    .brand i { color: #c22; font-style: normal; }
    .log { display: grid; grid-template-columns: 1fr 14px; margin-top: 5px; border-top: 2px solid #666; border-left: 1px solid #555; height: 37px; }
    .log pre { margin: 0; padding: 1px 0 0 4px; font: 9px/11px "Liberation Mono", monospace; color: #444; overflow: hidden; }
    .vs { display: flex; flex-direction: column; justify-content: space-between; padding-top: 2px; }
    .vs span { width: 12px; height: 11px; background: #ccc; border: 1px solid #aaa; }
    .vs span:nth-child(2) { background: #bbb; border-color: #555; }
    .hs { display: flex; height: 11px; margin: 0 13px 0 7px; background: #8c8c8c; }
    .hs i { width: 41%; min-width: 60px; background: #cbcbcb; border-radius: 5px; border: 1px solid #aaa; display: flex; justify-content: center; align-items: center; }
    .hs i::after { content: ""; width: 10px; height: 4px; background: #aaa; }
    .hs b { margin-left: auto; width: 12px; background: #ddd; border: 1px solid #bbb; }
    .entry { display: flex; align-items: center; justify-content: space-between; height: 15px; margin-top: 5px; padding: 0 4px; border-top: 2px solid #333; border-left: 1px solid #333; color: #999; font-size: 7px; }
    .ciw .status { flex: 1; padding: 0 5px 1px 12px; font-size: 9px; line-height: 11px; border-bottom: 1px solid #999; }
    .right .titlebar { flex: none; height: 12px; display: flex; align-items: center; justify-content: space-between; padding-left: 2px; background: #cbcbcb; border-bottom: 1px solid #aaa; white-space: nowrap; color: #cc1c1c; }
    .right .titlebar h1 { flex: none; width: 199px; font: 600 12px/11px "Open Sans", sans-serif; margin: 0 0 3px; }
    .sys { width: 17px; height: 11px; background: #e8e8e8; border: 1px solid #aaa; display: flex; align-items: center; justify-content: center; }
    .sys::after { content: ""; width: 11px; height: 3px; background: #fff; border: 1px solid #999; }
    .right > .menu { flex: none; height: 21px; padding-left: 11px; gap: 12px; font-size: 10px; }
    .right .rule { flex: none; }
    .r1 { height: 23px; margin-top: 6px; padding: 0 0 3px 1px; }
    .r2 { height: 24px; margin-top: 1px; padding-left: 1px; }
    .r2 .end { margin-left: auto; }
    .sel { align-self: center; display: flex; gap: 11px; padding-left: 5px; font: 10px "Open Sans", sans-serif; white-space: nowrap; }
    .body { flex: none; display: grid; grid-template-columns: 232px 1fr; height: 497px; column-gap: 6px; background: #cbcbcb; padding-left: 1px; }
    .body layout-canvas { border-top: 2px solid #b40808; }
    .b1 { height: 24px; margin-top: 1px; padding-left: 2px; }
    .b2 { height: 24px; margin-top: 3px; padding-left: 2px; }
    .b3 { flex: 1; margin-top: 4px; padding: 2px 0 2px 2px; }
  `];

  arrow(cls: string, h: number) {
    return svg`<svg class=${cls} width="15" height=${h} viewBox="0 0 15 ${h}"><path d="M7.500 0V${h - 20}" stroke="#f00000"/><path d="M0 ${h - 25}H15L7.500 ${h}z" fill="#ff0000"/></svg>`;
  }

  render() {
    return html`
      <header class="notes top">
        <span></span>
        <div class="note"><p>Schematic<br>view</p>${this.arrow("arrow a1", 249)}</div>
        <div class="note"><p>Palette<br>assistant</p>${this.arrow("arrow a2", 141)}</div>
        <div class="note"><p>Layout<br>view</p>${this.arrow("arrow a3", 151)}</div>
      </header>
      <main class="windows">
        <section class="win left">
          <nav class="menu">${menu(["_L_aunch", "_F_ile", "_E_dit", "_V_iew", "_C_reate", "Chec_k_", "O_p_tions", "_W_indow", "_H_elp"])}</nav>
          <div class="rule"></div>
          <div class="tools l1"><tool-bar pitch="33" items="| new open checksave saveoff | moveoff copyoff stretchoff xoff info text undooff redooff abc dash"></tool-bar></div>
          <div class="tools l2"><tool-bar pitch="33" items="| back v fwdoff w upoff topoff |"></tool-bar>
            <div class="combo"><select aria-label="Workspace"><option>Constraints</option></select><span class="drop"><span class="caret"></span></span></div>
            <tool-bar pitch="33" items="notesave viewdel | ~checksel netsel"></tool-bar></div>
          <div class="dark"></div>
          <schematic-canvas></schematic-canvas>
          <div class="status"><span>mouse L: schSingleSelectPt()</span><span>M: lxHiVerifyDesign()</span></div>
          <div class="prompt"><span>2(3)</span><input aria-label="prompt" value=">"></div>
          <section class="ciw">
            <div class="caption"><span class="box">–</span><h1>layoutPlus - Log: /projects/vxl/doc/testcases/FLOW_AMS_GCDK/design/custom_oa22/CDS.log.2</h1><span class="box">▾</span><span class="box">▴</span><span class="box">✕</span></div>
            <nav class="menu">${menu(["_F_ile", "_T_ools", "_O_ptions", "_H_elp"])}<span class="brand">c<i>ā</i>dence</span></nav>
            <div class="rule"></div>
            <div class="log"><pre>  Layout instances with no corresponding schematic instance: 0
  Instances present in schematic but missing from layout:    0
YXL timing. Initialization time = 0.72 seconds</pre><div class="vs"><span></span><span></span><span></span></div></div>
            <div class="hs"><i></i><b></b></div>
            <div class="entry"><span>▫</span><span>⠿</span></div>
            <div class="status"><span>mouse L: schSingleSelectPt()</span><span>M: ciwHiMousePopUp()</span><span>R: schZoomFit(1.0 0.9)</span></div>
          </section>
        </section>
        <section class="win right">
          <div class="titlebar"><span class="sys"></span><h1>Virtuoso® Layout Suite XL Editing</h1></div>
          <nav class="menu">${menu(["_L_aunch", "_F_ile", "_E_dit", "_V_iew", "_C_reate", "Veri_f_y", "Co_n_nectivity", "_O_ptions", "_T_ools", "_W_indow", "O_p_"])}</nav>
          <div class="rule"></div>
          <div class="tools r1"><tool-bar items="| open save . | undo redo : move copy stretch x rotate info align : target figoff > | neton"></tool-bar></div>
          <div class="tools r2"><tool-bar items="| rectcur ~route ~layers crosshair probe : gauge warnnet lamp : ~pencil ~warnburst"></tool-bar>
            <tool-bar class="end" items="> |"></tool-bar><span class="sel"><span>(F)Select:0</span><span>Sel(N)</span></span></div>
          <div class="body"><palette-panel></palette-panel><layout-canvas></layout-canvas></div>
          <div class="tools b1"><tool-bar items="| tree origin fit ring flow blackcross blocks folderx bars ladder globe map framecross swap resize framecross"></tool-bar></div>
          <div class="tools b2"><tool-bar items="| sendpair chipbox stamp tools clip mail screens okpair heartpair findpair findplug loop burst window spark greenbox"></tool-bar></div>
          <div class="tools b3"><tool-bar items="|"></tool-bar></div>
        </section>
      </main>
      <footer class="notes bottom"><span></span><div class="note"><p>CIW</p>${this.arrow("arrow up", 46)}</div></footer>`;
  }
}
